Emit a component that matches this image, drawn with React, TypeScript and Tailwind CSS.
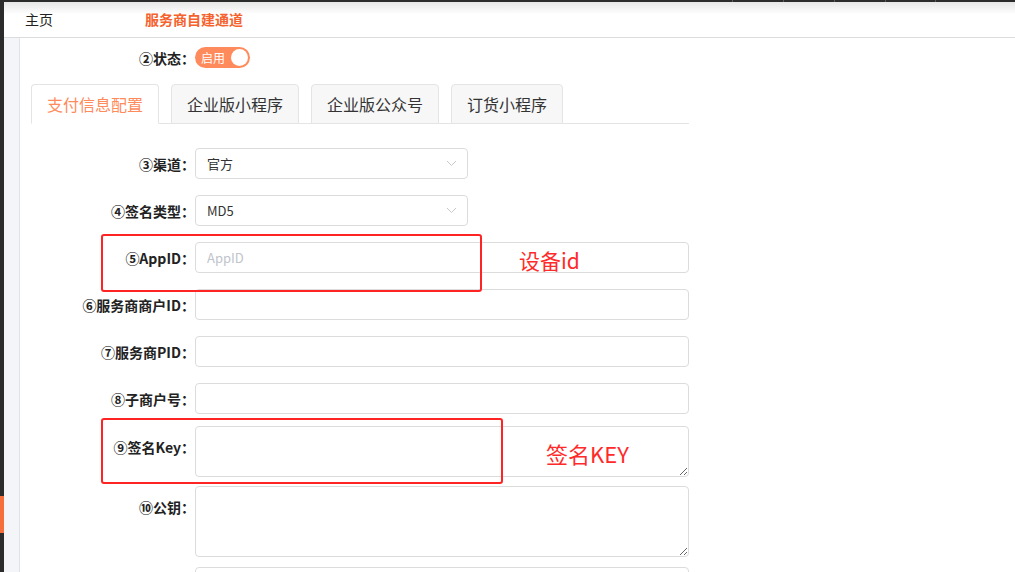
import { useState } from 'react';

const FONT = { fontFamily: '"Noto Sans CJK SC", "Noto Sans", sans-serif' };

const TABS = ['支付信息配置', '企业版小程序', '企业版公众号', '订货小程序'];

function Chevron() {
  return (
    <svg width="11" height="7" viewBox="0 0 11 7" fill="none">
      <path d="M1 1l4.5 4.5L10 1" stroke="#c8c8c8" strokeWidth="1" />
    </svg>
  );
}

function Label({ text, top = false }: { text?: string; top?: boolean }) {
  return (
    <div
      className={`w-[175px] shrink-0 text-right text-[14px] font-bold text-[#222] leading-[16px] ${top ? 'pt-[13px]' : ''}`}
    >
      {text && `${text}：`}
    </div>
  );
}

function SelectBox({ value }: { value: string }) {
  return (
    <div className="w-[273px] h-[31px] border border-[#dcdcdc] rounded-[4px] flex items-center justify-between pl-[11px] pr-[10px] text-[13px] text-[#333]">
      <span>{value}</span>
      <Chevron />
    </div>
  );
}

function TextInput({ placeholder }: { placeholder?: string }) {
  return (
    <input
      placeholder={placeholder}
      className="w-[494px] h-[31px] border border-[#dcdcdc] rounded-[4px] px-[11px] text-[13px] outline-none placeholder:text-[#c0c4cc]"
      style={FONT}
    />
  );
}

function Area({ h }: { h: string }) {
  return (
    <textarea
      className={`w-[494px] ${h} border border-[#dcdcdc] rounded-[4px] px-[11px] py-[6px] text-[13px] outline-none block`}
      style={FONT}
    />
  );
}

export default function App() {
  const [tab, setTab] = useState(0);

  return (
    <div className="flex w-[1015px] h-[572px] overflow-hidden bg-white" style={FONT}>
      {/* far left nav strip */}
      <div className="w-[4px] shrink-0 flex flex-col bg-[#2b2b2b]">
        <div className="h-[496px]" />
        <div className="h-[37px] bg-[#f56f3c]" />
      </div>

      <div className="flex-1 flex flex-col min-w-0">
        {/* top bar */}
        <div className="h-[2px] flex bg-[#2b2b2b]">
          <div className="w-[728px]" />
          <div className="w-[51px] border-l border-[#5a5a5a]" />
          <div className="w-[51px] border-l border-[#5a5a5a]" />
          <div className="w-[51px] border-l border-[#5a5a5a]" />
          <div className="w-[50px] border-l border-[#5a5a5a]" />
          <div className="flex-1 border-l border-[#5a5a5a]" />
        </div>

        {/* breadcrumb header */}
        <header className="h-[36px] shrink-0 flex items-center border-b border-[#dcdcdc] bg-linear-to-b from-[#e6e6e6] to-white to-[35%] text-[14px]">
          <span className="ml-[21px] text-[#222]">主页</span>
          <span className="ml-[92px] font-bold text-[#f5622d]">服务商自建通道</span>
        </header>

        <div className="flex flex-1 min-h-0">
          <div className="w-[16px] shrink-0 bg-[#f4f5f9] border-r border-[#e3e3e6]" />

          <main className="relative flex-1 flex flex-col">
            {/* status */}
            <div className="flex items-center mt-[9px]">
              <Label text="②状态" />
              <div className="w-[55px] h-[21px] rounded-full bg-[#ff8a5b] flex items-center justify-between pl-[6px] pr-[2px]">
                <span className="text-[12px] text-white leading-none">启用</span>
                <span className="w-[17px] h-[17px] rounded-full bg-white" />
              </div>
            </div>

            {/* tabs */}
            <div className="ml-[11px] mt-[16px] w-[658px] flex gap-[12px] border-b border-[#e4e4e4]">
              {TABS.map((t, i) => (
                <button
                  key={t}
                  onClick={() => setTab(i)}
                  className={`h-[40px] -mb-px px-[15px] rounded-t-[4px] border border-[#e4e4e4] text-[16px] ${
                    tab === i ? 'bg-white border-b-white text-[#ff8a5b]' : 'bg-[#f7f7f7] text-[#333]'
                  }`}
                >
                  {t}
                </button>
              ))}
            </div>

            {/* form */}
            <div className="flex flex-col mt-[24px]">
              <div className="flex items-center">
                <Label text="③渠道" />
                <SelectBox value="官方" />
              </div>
              <div className="flex items-center mt-[16px]">
                <Label text="④签名类型" />
                <SelectBox value="MD5" />
              </div>
              <div className="flex items-center mt-[16px]">
                <Label text="⑤AppID" />
                <TextInput placeholder="AppID" />
              </div>
              <div className="flex items-center mt-[16px]">
                <Label text="⑥服务商商户ID" />
                <TextInput />
              </div>
              <div className="flex items-center mt-[16px]">
                <Label text="⑦服务商PID" />
                <TextInput />
              </div>
              <div className="flex items-center mt-[16px]">
                <Label text="⑧子商户号" />
                <TextInput />
              </div>
              <div className="flex items-start mt-[12px]">
                <Label text="⑨签名Key" top />
                <Area h="h-[51px]" />
              </div>
              <div className="flex items-start mt-[9px]">
                <Label text="⑩公钥" top />
                <Area h="h-[71px]" />
              </div>
              <div className="flex items-start mt-[10px]">
                <Label />
                <TextInput />
              </div>
            </div>

            {/* annotations */}
            <div className="absolute left-[81px] top-[196px] w-[381px] h-[58px] border-2 border-[#ff2424] rounded-[3px]" />
            <span className="absolute left-[499px] top-[207px] text-[21px] leading-[30px] text-[#ff2a2a]">设备id</span>
            <div className="absolute left-[81px] top-[380px] w-[402px] h-[66px] border-2 border-[#ff2424] rounded-[3px]" />
            <span className="absolute left-[526px] top-[399px] text-[22px] leading-[32px] text-[#ff2a2a]">签名KEY</span>
          </main>
        </div>
      </div>
    </div>
  );
}
